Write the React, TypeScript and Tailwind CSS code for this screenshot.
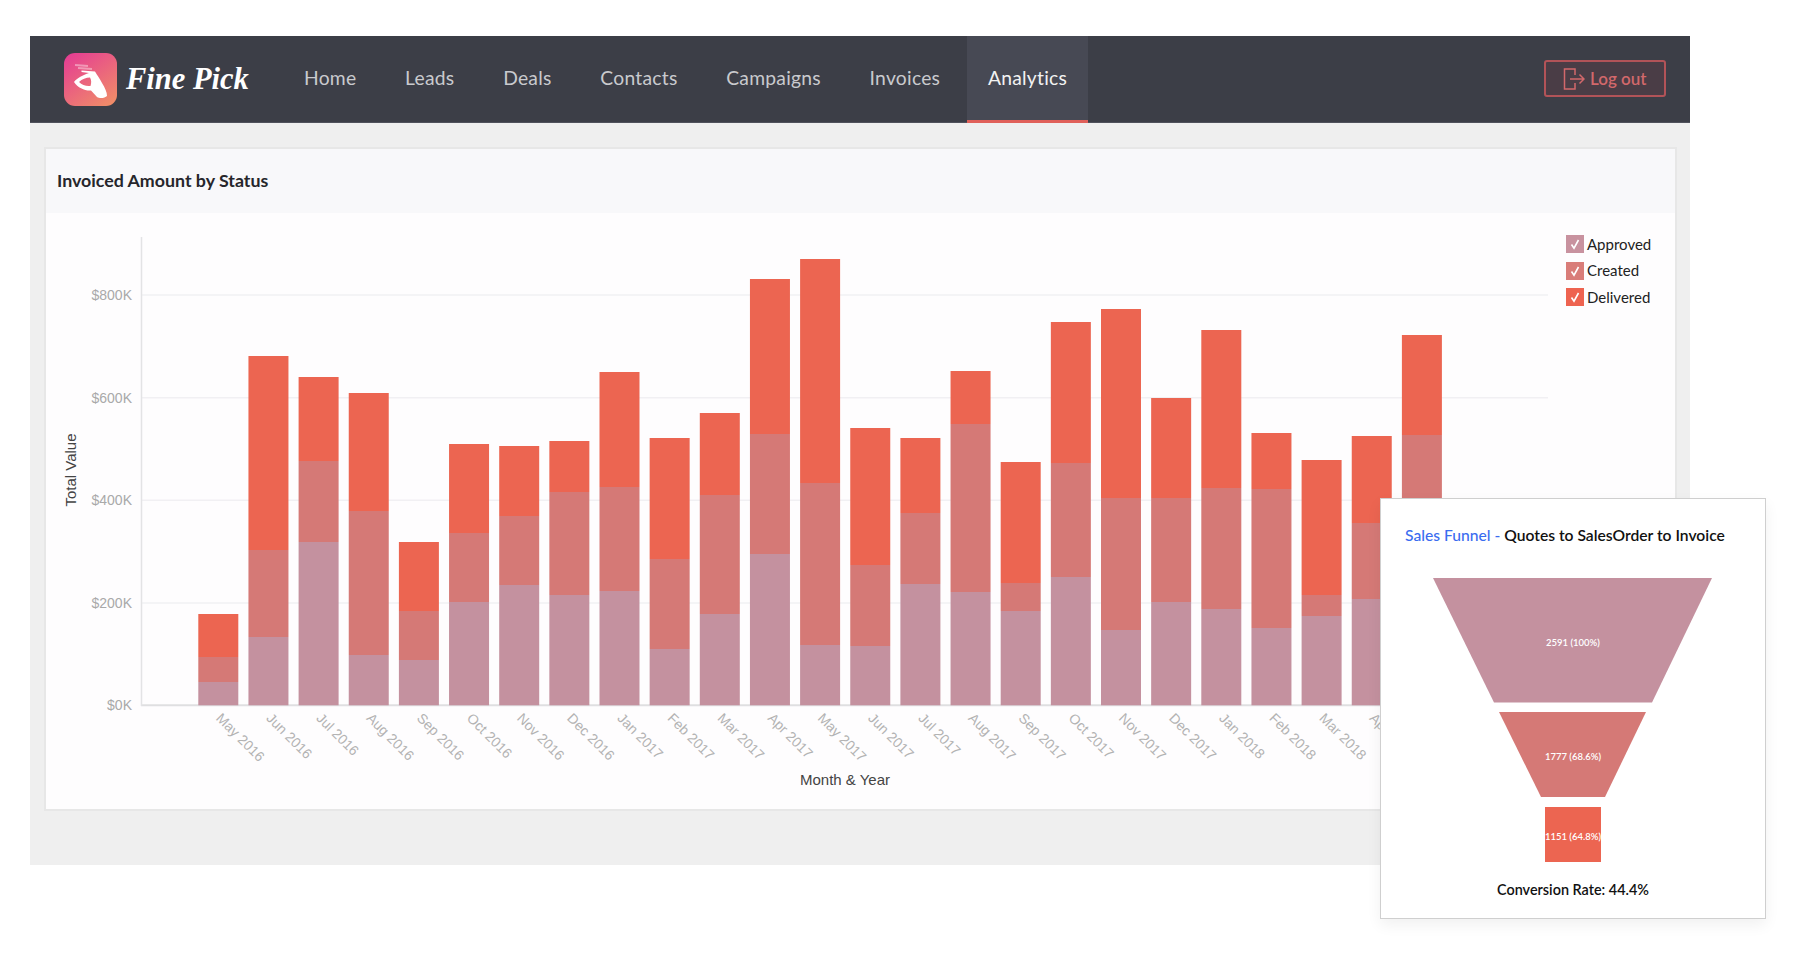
const navItems = ['Home', 'Leads', 'Deals', 'Contacts', 'Campaigns', 'Invoices', 'Analytics']

const months = [
  'May 2016', 'Jun 2016', 'Jul 2016', 'Aug 2016', 'Sep 2016', 'Oct 2016', 'Nov 2016', 'Dec 2016',
  'Jan 2017', 'Feb 2017', 'Mar 2017', 'Apr 2017', 'May 2017', 'Jun 2017', 'Jul 2017', 'Aug 2017',
  'Sep 2017', 'Oct 2017', 'Nov 2017', 'Dec 2017', 'Jan 2018', 'Feb 2018', 'Mar 2018', 'Apr 2018', 'May 2018',
]

// top edge of each segment: delivered, created, approved
const bars = [
  [614, 657, 682], [356, 550, 637], [377, 461, 542], [393, 511, 655], [542, 611, 660],
  [444, 533, 602], [446, 516, 585], [441, 492, 595], [372, 487, 591], [438, 559, 649],
  [413, 495, 614], [279, 434, 554], [259, 483, 645], [428, 565, 646], [438, 513, 584],
  [371, 424, 592], [462, 583, 611], [322, 463, 577], [309, 498, 630], [398, 498, 602],
  [330, 488, 609], [433, 489, 628], [460, 595, 616], [436, 523, 599], [335, 435, 560],
]

const yTicks = [
  { label: '$800K', y: 295 },
  { label: '$600K', y: 397.7 },
  { label: '$400K', y: 500.3 },
  { label: '$200K', y: 603 },
  { label: '$0K', y: 705.3 },
]

const legend = [
  { label: 'Approved', cls: 'bg-[#c8929f]' },
  { label: 'Created', cls: 'bg-[#d97d79]' },
  { label: 'Delivered', cls: 'bg-[#ee6350]' },
]

function Logo() {
  return (
    <div className="flex items-center gap-[9px] w-[252px] pl-[34px] font-['Liberation_Serif',serif]">
      <svg width="53" height="53" viewBox="0 0 53 53" className="shrink-0">
        <defs>
          <linearGradient id="logo-bg" x1="0.15" y1="0" x2="0.85" y2="1">
            <stop offset="0" stopColor="#e53f92" />
            <stop offset="1" stopColor="#f08c68" />
          </linearGradient>
        </defs>
        <rect width="53" height="53" rx="11" fill="url(#logo-bg)" />
        <path d="M11 12l13 1M14 15l14 1" stroke="#fff" strokeOpacity="0.4" strokeWidth="2" fill="none" />
        <path
          fillRule="evenodd"
          fill="#fff"
          d="M10 29C13 25 19 22 25 20L17.5 19L17.5 17.5L31 18.5C33 22 36 26 38 30C41 35 43 39 43 43C41 45 36 46 33 44L27 37.5C21 38 14 35 10 29ZM15 29C18 26 22 24.5 26 24.5C27.5 27 27.5 30 26.5 33C22 33.5 18 32 15 29Z"
        />
      </svg>
      <span className="text-[30.5px] leading-none font-bold italic text-white whitespace-nowrap">Fine Pick</span>
    </div>
  )
}

function Header() {
  return (
    <header className="flex items-stretch h-[87px] bg-[#3c3e47] shadow-[inset_0_-1px_0_#50525c]">
      <Logo />
      <nav className="flex items-stretch gap-[4.7px]">
        {navItems.map(item => {
          const active = item === 'Analytics'
          return (
            <a
              key={item}
              className={`flex items-center text-[19.3px] tracking-[0.25px] ${
                active
                  ? 'px-[21px] bg-[#474954] text-[#f2f2f2] border-b-[3px] border-[#e0605a]'
                  : 'px-[22px] pb-[3px] text-[#c9cace]'
              }`}
            >
              {item}
            </a>
          )
        })}
      </nav>
      <div className="flex items-center ml-auto pr-[24px]">
        <button className="flex items-center gap-[5px] w-[122px] h-[37px] -mt-[2px] pl-[17px] rounded-[3px] border-2 border-[#b25358] bg-[#4a3d46] text-[#d2686b] text-[17px] font-semibold">
          <svg width="22" height="22" viewBox="0 0 22 22" fill="none" stroke="currentColor" strokeWidth="1.5">
            <path d="M12 7V1H1.5v20H12v-6" />
            <path d="M7 11h14M16.5 6.5L21 11l-4.5 4.5" />
          </svg>
          Log out
        </button>
      </div>
    </header>
  )
}

function BarChart() {
  return (
    <svg width="1514" height="597" viewBox="46 213 1514 597" className="shrink-0 font-['Liberation_Sans',sans-serif]">
      {yTicks.map(t => (
        <g key={t.label}>
          <line
            x1="141"
            x2="1548"
            y1={t.y}
            y2={t.y}
            stroke={t.y > 700 ? '#dfdfe1' : '#f1f0f3'}
            strokeWidth={t.y > 700 ? 2 : 1.5}
          />
          <text x="132" y={t.y + 5} textAnchor="end" fontSize="14" fill="#a9a9a9">
            {t.label}
          </text>
        </g>
      ))}
      <line x1="141.5" x2="141.5" y1="237" y2="706" stroke="#e3e3e5" strokeWidth="1.5" />
      {bars.map((b, i) => {
        const x = 198.3 + i * 50.15
        return (
          <g key={months[i]}>
            <rect x={x} y={b[0]} width="40" height={b[1] - b[0]} fill="#ec6551" />
            <rect x={x} y={b[1]} width="40" height={b[2] - b[1]} fill="#d57976" />
            <rect x={x} y={b[2]} width="40" height={705.3 - b[2]} fill="#c4919f" />
            <text
              x={x + 17}
              y="719"
              fontSize="14"
              fill="#b3b3b3"
              transform={`rotate(45 ${x + 17} 719)`}
            >
              {months[i]}
            </text>
          </g>
        )
      })}
      <text x="71" y="0" transform="rotate(-90 71 470) translate(0 470)" textAnchor="middle" fontSize="15" fill="#444" dy="5">
        Total Value
      </text>
      <text x="845" y="785" textAnchor="middle" fontSize="15" fill="#444">
        Month &amp; Year
      </text>
    </svg>
  )
}

function Legend() {
  return (
    <div className="flex flex-col gap-[8.5px] pt-[22px] pl-[6px]">
      {legend.map(l => (
        <div key={l.label} className="flex items-center gap-[3px] h-[18px] text-[15px] text-[#222] font-['Lato',sans-serif]">
          <span className={`w-[18px] h-[18px] ${l.cls}`}>
            <svg width="18" height="18" viewBox="0 0 18 18" fill="none" stroke="#fff" strokeWidth="1.6">
              <path d="M5.5 9.5L8 13.2L12.5 5" />
            </svg>
          </span>
          {l.label}
        </div>
      ))}
    </div>
  )
}

function FunnelCard() {
  return (
    <div className="absolute left-[1380px] top-[498px] w-[386px] h-[421px] bg-white border border-[#cfcfcf] shadow-[0_6px_14px_rgba(0,0,0,0.06)] font-['Lato',sans-serif]">
      <div className="h-[20px] mt-[26px] pl-[24px] text-[15.65px] leading-[20px] font-semibold text-[#111] whitespace-nowrap">
        <span className="text-[#3a6cf0] font-medium">Sales Funnel - </span>Quotes to SalesOrder to Invoice
      </div>
      <svg width="384" height="284" viewBox="1381 578 384 284" className="block mt-[33px]">
        <polygon points="1433,578 1712,578 1652,702.5 1494,702.5" fill="#c4919f" />
        <polygon points="1499,712 1646,712 1605,797 1541,797" fill="#d57976" />
        <rect x="1545" y="807" width="56" height="55" fill="#ec6551" />
        <g fill="#fff" fontSize="9.5" fontWeight="600" textAnchor="middle">
          <text x="1573" y="645.5">2591 (100%)</text>
          <text x="1573" y="759.5">1777 (68.6%)</text>
          <text x="1573" y="839.5">1151 (64.8%)</text>
        </g>
      </svg>
      <div className="mt-[18px] text-center text-[14.4px] leading-[20px] font-semibold text-[#111]">Conversion Rate: 44.4%</div>
    </div>
  )
}

export default function App() {
  return (
    <div className="relative w-[1800px] h-[954px] bg-white overflow-hidden font-['Lato',sans-serif]">
      <div className="pt-[36px] pl-[30px]">
        <div className="w-[1660px]">
          <Header />
          <main className="h-[742px] bg-[#efefef] pl-[14px] pr-[13px] pt-[24px]">
            <section className="h-[664px] border-2 border-[#e7e7e7] bg-[#fefdfe]">
              <div className="flex items-center h-[64px] pl-[11px] pb-[1px] bg-[#f8f8fa] text-[17.8px] font-bold text-[#26262b]">
                Invoiced Amount by Status
              </div>
              <div className="flex">
                <BarChart />
                <Legend />
              </div>
            </section>
          </main>
        </div>
      </div>
      <FunnelCard />
    </div>
  )
}
